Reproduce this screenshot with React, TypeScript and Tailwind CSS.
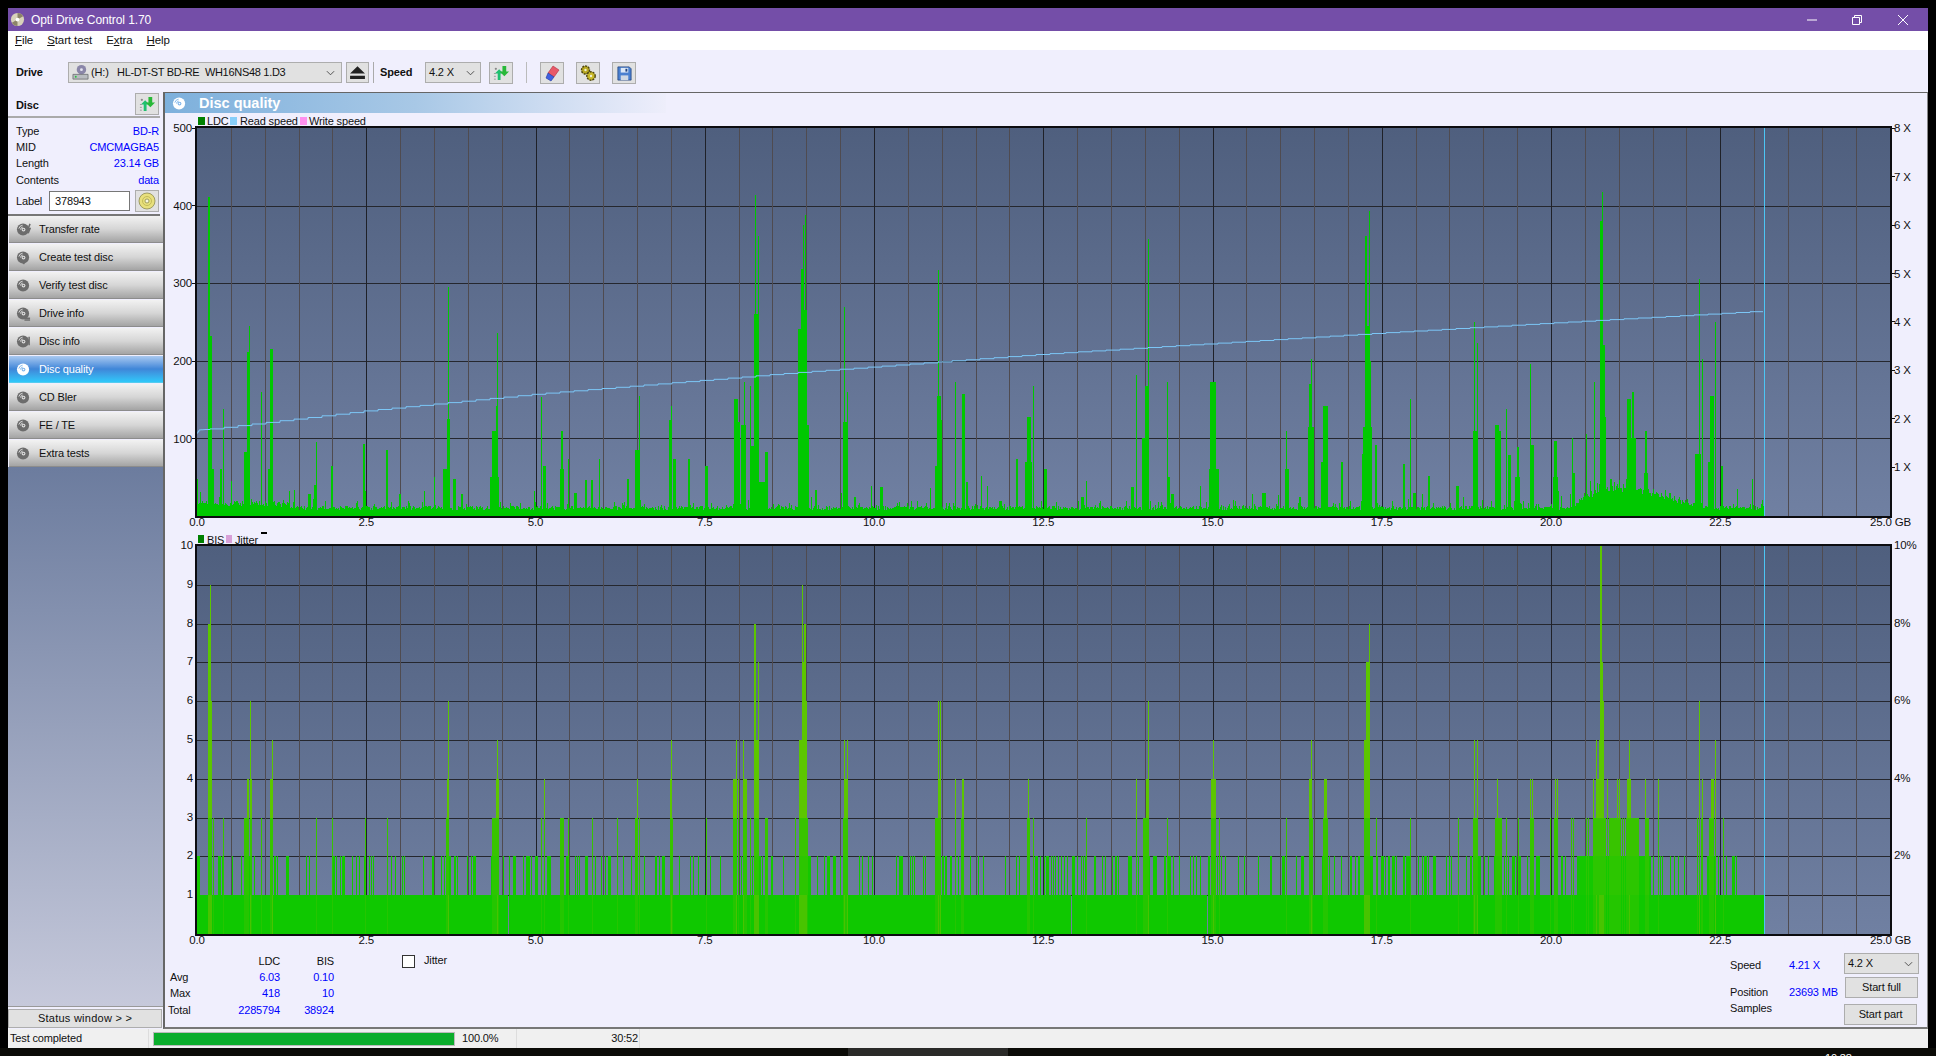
import React from "react";

// plot geometry, in page pixels (the svg viewBoxes use page coordinates)
const X0 = 197;
const GB = 67.7;
const XEND = 1764;
const RIGHT = 1891;
const TOP1 = 128;
const BOT1 = 516;
const TOP2 = 546;
const BOT2 = 934;

type Spike = [number, number, number?];

// spike positions are read from crops: x = offset + zx / 2.613
const ldcSections: [number, Spike[]][] = [
  [190, [[18, 48, 2], [50, 410, 2], [52, 232, 4], [60, 60, 2], [85, 138, 1], [82, 60, 2], [108, 45, 1], [155, 245, 1], [152, 211, 3], [147, 82, 5], [186, 160, 1], [212, 215, 3], [210, 60, 5], [330, 95, 1], [327, 40, 3], [310, 28, 3], [372, 65, 2], [455, 93, 2], [516, 85, 2], [550, 28, 2], [637, 50, 1], [675, 295, 1], [673, 125, 3], [670, 60, 6], [690, 48, 3], [710, 28, 2], [800, 142, 1], [803, 235, 1], [798, 110, 6], [795, 50, 9], [916, 153, 1], [925, 65, 3], [973, 109, 2], [972, 60, 4], [988, 74, 1], [1005, 30, 3], [1035, 46, 2], [1050, 46, 2], [1070, 74, 1], [1145, 48, 2], [1168, 85, 4], [1174, 155, 1], [1257, 142, 1], [1255, 123, 3], [1265, 74, 3], [1303, 74, 2], [1348, 65, 3], [1427, 151, 4], [1432, 121, 3], [1447, 172, 1], [1445, 117, 5], [1462, 168, 1], [1477, 413, 1], [1479, 260, 4], [1485, 361, 1], [1475, 90, 9], [1505, 82, 3], [1495, 44, 6]]],
  [780, [[66, 387, 1], [60, 374, 1], [58, 318, 2], [63, 265, 5], [54, 241, 6], [62, 117, 9], [95, 33, 2], [168, 269, 1], [176, 160, 1], [171, 121, 4], [195, 25, 2], [238, 39, 1], [265, 37, 3], [391, 36, 1], [414, 317, 1], [415, 155, 4], [420, 123, 1], [413, 65, 6], [457, 172, 1], [478, 157, 3], [488, 44, 2], [526, 52, 1], [542, 39, 1], [575, 20, 3], [618, 74, 2], [650, 127, 4], [662, 168, 1], [648, 70, 7], [692, 61, 3], [788, 25, 3], [800, 45, 1], [920, 37, 3], [931, 182, 1], [961, 357, 1], [957, 168, 3], [955, 100, 6], [1012, 173, 1], [1015, 50, 3], [1025, 28, 3], [1098, 39, 1], [1131, 173, 6], [1133, 60, 10], [1265, 30, 4], [1323, 110, 1], [1325, 60, 4], [1358, 25, 2], [1387, 202, 1], [1385, 170, 3], [1388, 115, 6], [1425, 142, 5], [1422, 65, 7], [1468, 70, 2], [1530, 361, 1], [1540, 393, 1], [1533, 245, 5], [1535, 115, 9], [1558, 91, 1]]],
  [1320, [[14, 142, 5], [10, 70, 7], [57, 70, 2], [118, 361, 1], [129, 393, 1], [125, 200, 5], [123, 80, 10], [147, 91, 2], [220, 67, 2], [235, 151, 1], [245, 30, 3], [285, 52, 2], [358, 39, 3], [403, 250, 1], [411, 223, 1], [405, 110, 4], [462, 117, 4], [470, 110, 2], [487, 138, 1], [495, 78, 3], [518, 89, 2], [516, 50, 5], [550, 196, 1], [555, 91, 3], [615, 96, 3], [613, 50, 5], [658, 100, 1], [660, 55, 3], [696, 106, 1], [717, 172, 1], [736, 417, 1], [733, 380, 3], [736, 220, 5], [743, 128, 3], [760, 48, 2], [808, 151, 4], [818, 160, 2], [812, 100, 9], [853, 109, 2], [851, 55, 4], [991, 305, 1], [988, 80, 6], [999, 202, 1], [1024, 154, 4], [1031, 250, 1], [1019, 70, 5], [1050, 65, 2], [1090, 35, 1], [1128, 48, 1]]],
];

const bisSections: [number, Spike[]][] = [
  [190, [[50, 8, 3], [53, 9, 1], [55, 6, 2], [60, 3, 1], [85, 3, 1], [147, 3, 5], [152, 4, 2], [158, 6, 1], [160, 4, 2], [186, 3, 1], [212, 4, 3], [215, 5, 1], [330, 3, 1], [372, 3, 1], [457, 3, 1], [516, 3, 1], [672, 3, 3], [675, 4, 2], [675, 6, 1], [797, 3, 6], [800, 4, 1], [803, 5, 1], [806, 4, 1], [916, 3, 1], [924, 4, 1], [973, 3, 4], [988, 3, 1], [1050, 3, 1], [1117, 3, 1], [1165, 3, 3], [1167, 4, 1], [1172, 3, 1], [1256, 4, 2], [1258, 5, 1], [1260, 3, 1], [1348, 3, 1], [1425, 4, 4], [1428, 5, 1], [1432, 4, 1], [1446, 5, 1], [1449, 4, 3], [1462, 3, 1], [1476, 8, 2], [1484, 7, 1], [1480, 5, 4], [1505, 3, 3]]],
  [780, [[38, 3, 1], [55, 5, 5], [62, 6, 5], [60, 7, 2], [58, 9, 1], [63, 8, 1], [66, 8, 1], [70, 3, 2], [168, 5, 1], [176, 5, 1], [172, 4, 4], [170, 3, 4], [410, 3, 5], [416, 4, 2], [414, 6, 1], [419, 6, 1], [457, 4, 1], [476, 3, 2], [478, 4, 2], [648, 3, 3], [649, 4, 1], [662, 3, 1], [800, 3, 1], [931, 4, 1], [955, 3, 4], [958, 4, 3], [961, 6, 1], [1012, 3, 1], [1132, 4, 5], [1131, 5, 1], [1148, 3, 1], [1323, 3, 1], [1384, 4, 3], [1388, 5, 1], [1390, 3, 2], [1423, 3, 3], [1425, 4, 3], [1532, 5, 5], [1530, 7, 1], [1535, 7, 1], [1540, 8, 1], [1558, 3, 1]]],
  [1320, [[12, 4, 3], [12, 3, 5], [120, 5, 5], [120, 7, 1], [125, 7, 1], [129, 8, 1], [147, 3, 1], [235, 3, 1], [360, 3, 1], [406, 3, 4], [403, 5, 1], [411, 5, 1], [466, 3, 7], [463, 4, 1], [487, 3, 1], [518, 3, 1], [553, 3, 3], [550, 4, 1], [555, 4, 1], [600, 3, 1], [616, 3, 4], [613, 4, 1], [618, 4, 1], [655, 3, 1], [662, 3, 1], [695, 3, 1], [700, 3, 1], [714, 4, 1], [720, 5, 1], [718, 3, 3], [735, 5, 5], [730, 4, 6], [736, 6, 4], [734, 7, 3], [733, 8, 2], [731, 10, 1], [735, 10, 1], [745, 3, 2], [750, 4, 1], [757, 3, 3], [765, 3, 3], [775, 4, 1], [782, 4, 1], [773, 3, 6], [785, 3, 2], [815, 3, 9], [807, 4, 4], [808, 5, 1], [830, 3, 1], [848, 4, 1], [855, 3, 3], [882, 4, 1], [985, 3, 1], [991, 6, 1], [998, 4, 1], [995, 3, 1], [1020, 3, 3], [1024, 4, 3], [1031, 5, 1], [1052, 3, 1]]],
];

function rng(seed: number) {
  let s = seed;
  return () => {
    s = (s + 0x6d2b79f5) | 0;
    let t = Math.imul(s ^ (s >>> 15), 1 | s);
    t = (t + Math.imul(t ^ (t >>> 7), 61 | t)) ^ t;
    return ((t ^ (t >>> 14)) >>> 0) / 4294967296;
  };
}

function applySpikes(cols: number[], sections: [number, Spike[]][]) {
  sections.forEach(([offset, spikes]) => {
    spikes.forEach(([zx, value, width = 1]) => {
      const x = Math.round(offset + zx / 2.613);
      const start = x - Math.floor(width / 2);
      for (let i = start; i < start + width; i++) {
        const idx = i - X0;
        if (idx >= 0 && idx < cols.length && cols[idx] < value) cols[idx] = value;
      }
    });
  });
}

function humpAt(x: number) {
  const pts = [[1570, 0], [1588, 20], [1618, 30], [1645, 24], [1664, 15], [1687, 7], [1705, 0]];
  for (let i = 1; i < pts.length; i++) {
    if (x <= pts[i][0] && x >= pts[i - 1][0]) {
      const f = (x - pts[i - 1][0]) / (pts[i][0] - pts[i - 1][0]);
      return pts[i - 1][1] + f * (pts[i][1] - pts[i - 1][1]);
    }
  }
  return 0;
}

function buildLdc() {
  const r = rng(42);
  const cols: number[] = [];
  for (let x = X0; x < XEND; x++) {
    let v = 8 + r() * 5;
    if (x < 290) v += 5 * r() + 3;
    if (r() < 0.14) v += r() * 9;
    if (r() < 0.012) v += 8 + r() * 14;
    v += humpAt(x) * (0.75 + r() * 0.35);
    cols.push(v);
  }
  applySpikes(cols, ldcSections);
  return cols;
}

function buildBis() {
  const r = rng(7);
  const cols: number[] = [];
  let run = 0;
  for (let x = X0; x < XEND; x++) {
    if (run > 0) run--;
    else if (r() < 0.09) run = r() < 0.3 ? 3 : 1;
    const dense = x > 1576 && x < 1650;
    let v = (run > 0 || r() < 0.1 || dense) && x < 1739 ? 2 : 1;
    if (x > 1594 && x < 1638 && r() < 0.45) v = 3;
    cols.push(v);
  }
  applySpikes(cols, bisSections);
  [508, 1071, 1207].forEach((x) => (cols[x - X0] = 0));
  return cols;
}

const ldc = buildLdc();
const bis = buildBis();

const ldcPath = ldc
  .map((v, i) => `M${X0 + i + 0.5} ${BOT1}V${(BOT1 - v * 0.777).toFixed(1)}`)
  .join("");

// columns are tinted by their height, the lower part keeps a hint of it
function bisColumns(color: string, test: (v: number) => boolean, from: number, to: number) {
  const d = bis
    .map((v, i) => {
      if (!test(v) || v <= from) return "";
      const top = Math.min(v, to);
      return `M${X0 + i + 0.5} ${BOT2 - from * 38.8}V${(BOT2 - top * 38.8).toFixed(1)}`;
    })
    .join("");
  return <path key={`${color}${from}${to}`} d={d} stroke={color} />;
}

// stepped read speed curve
const speedPts = [[197, 433], [199, 430], [205, 429.5], [366, 410.7], [535, 394], [705, 380], [790, 373], [1043, 354], [1380, 333], [1550, 323], [1763, 311]];
function speedPath() {
  let d = `M197 433`;
  let last = 433;
  for (let x = 198; x <= 1763; x++) {
    const j = speedPts.findIndex((p) => p[0] >= x);
    const a = speedPts[j - 1];
    const b = speedPts[j];
    const y = a[1] + ((x - a[0]) / (b[0] - a[0])) * (b[1] - a[1]);
    if (x < 206 || x % 14 === 0) {
      d += `H${x}V${y.toFixed(1)}`;
      last = y;
    }
  }
  return `${d}H1763V${last.toFixed(1)}`;
}

const minor = Array.from({ length: 49 }, (_, i) => i + 1);

function PlotGrid({ top, bottom, hLines, id }: { top: number; bottom: number; hLines: number[]; id: string }) {
  return (
    <>
      <defs>
        <linearGradient id={id} x1="0" y1="0" x2="0" y2="1">
          <stop offset="0" stopColor="#4f5f7e" />
          <stop offset="1" stopColor="#7080a2" />
        </linearGradient>
      </defs>
      <rect x={X0} y={top} width={RIGHT - X0} height={bottom - top} fill={`url(#${id})`} />
      <g shapeRendering="crispEdges">
        {hLines.map((y) => (
          <path key={y} d={`M${X0} ${y}H${RIGHT}`} stroke="#25272e" />
        ))}
        {minor.map((i) => {
          const x = Math.round(X0 + i * 33.85) + 0.5;
          return <path key={i} d={`M${x} ${top}V${bottom}`} stroke={i % 5 === 0 ? "#1f2128" : "#4f4b50"} />;
        })}
      </g>
    </>
  );
}

function PlotFrame({ top, bottom, labels }: { top: number; bottom: number; labels: number }) {
  const ticks = [0, 2.5, 5, 7.5, 10, 12.5, 15, 17.5, 20, 22.5];
  return (
    <g>
      <path d={`M${X0 - 1} ${top - 1}H${RIGHT}V${bottom + 1}H${X0 - 1}Z`} fill="none" stroke="#0c0c10" strokeWidth="2" shapeRendering="crispEdges" />
      <path d={`M${XEND + 0.5} ${top}V${bottom}`} stroke="#4cc6f4" strokeWidth="1" shapeRendering="crispEdges" />
      {ticks.map((t) => (
        <text key={t} x={X0 + t * GB} y={labels} fontSize="11.5" textAnchor="middle" fill="#111">
          {t.toFixed(1)}
        </text>
      ))}
      <text x="1870" y={labels} fontSize="11.5" fill="#111">
        25.0 GB
      </text>
    </g>
  );
}

function LdcChart() {
  const left = [500, 400, 300, 200, 100];
  return (
    <svg viewBox="165 113 1762 419" className="w-[1762px] h-[419px]">
      <rect x="198" y="117" width="7" height="8" fill="#008000" />
      <text x="207" y="125" fontSize="11" fill="#111">LDC</text>
      <rect x="230" y="117" width="7" height="8" fill="#87cefa" />
      <text x="240" y="125" fontSize="11" fill="#111">Read speed</text>
      <rect x="300" y="117" width="7" height="8" fill="#ff90ee" />
      <text x="309" y="125" fontSize="11" fill="#111">Write speed</text>
      <PlotGrid top={TOP1} bottom={BOT1} id="plotA" hLines={[206.5, 283.5, 361.5, 438.5]} />
      <path d={ldcPath} stroke="#00c800" strokeWidth="1" shapeRendering="crispEdges" />
      <path d={speedPath()} stroke="#7cc6f6" strokeWidth="1" fill="none" />
      <PlotFrame top={TOP1} bottom={BOT1} labels={526} />
      {left.map((v, i) => {
        const y = 128 + i * 77.7;
        return (
          <g key={v}>
            <path d={`M192 ${y}H197`} stroke="#111" shapeRendering="crispEdges" />
            <text x="192" y={y + 4} fontSize="11.5" textAnchor="end" fill="#111">{v}</text>
          </g>
        );
      })}
      {[8, 7, 6, 5, 4, 3, 2, 1].map((v) => {
        const y = 515.5 - v * 48.4;
        return (
          <g key={v}>
            <path d={`M1891 ${y}H1895`} stroke="#111" shapeRendering="crispEdges" />
            <text x="1894" y={y + 4} fontSize="11.5" fill="#111">{`${v} X`}</text>
          </g>
        );
      })}
    </svg>
  );
}

function BisChart() {
  const rows = [1, 2, 3, 4, 5, 6, 7, 8, 9];
  return (
    <svg viewBox="165 532 1762 415" className="w-[1762px] h-[415px]">
      <rect x="198" y="535" width="6" height="8" fill="#008000" />
      <text x="207" y="544" fontSize="11" fill="#111">BIS</text>
      <rect x="226" y="535" width="6" height="8" fill="#d8a0d8" />
      <text x="235" y="544" fontSize="11" fill="#111">Jitter</text>
      <rect x="261" y="532" width="6" height="2" fill="#000" />
      <PlotGrid top={TOP2} bottom={BOT2} id="plotB" hLines={rows.map((v) => Math.round(BOT2 - v * 38.8) + 0.5)} />
      <g strokeWidth="1" shapeRendering="crispEdges">
        {bisColumns("#0fc800", (v) => v < 3, 0, 1)}
        {bisColumns("#24c600", (v) => v === 3 || v === 4, 0, 1)}
        {bisColumns("#48c400", (v) => v >= 5, 0, 1)}
        {bisColumns("#14c800", (v) => v === 2, 1, 2)}
        {bisColumns("#2cc600", (v) => v >= 3, 1, 2)}
        {bisColumns("#38c400", (v) => v >= 3, 2, 3)}
        {bisColumns("#5cc600", (v) => v >= 4, 3, 10)}
      </g>
      <PlotFrame top={TOP2} bottom={BOT2} labels={944} />
      {[10, ...rows.slice().reverse()].map((v) => (
        <text key={v} x="193" y={BOT2 - v * 38.8 + 3} fontSize="11.5" textAnchor="end" fill="#111">{v}</text>
      ))}
      {[10, 8, 6, 4, 2].map((v) => (
        <text key={v} x="1894" y={BOT2 - v * 38.8 + 3} fontSize="11.5" fill="#111">{`${v}%`}</text>
      ))}
    </svg>
  );
}

function DiscIcon({ light = false, extra }: { light?: boolean; extra?: string }) {
  const c = light ? "#ffffff" : "#6c6c6c";
  const h = light ? "#7db4ea" : "#e2e2e2";
  return (
    <svg viewBox="0 0 16 16" className="w-[15px] h-[15px] shrink-0">
      <circle cx="7.5" cy="8" r="6.5" fill={c} />
      <path d="M3 7a5 5 0 0 1 4-3.6M4.8 8a3 3 0 0 1 2.4-2.6" stroke={h} strokeWidth="1" fill="none" />
      <circle cx="8" cy="8" r="2" fill={h} />
      <circle cx="8" cy="8" r="0.9" fill={c} />
      {extra && <path d={extra} stroke={c} strokeWidth="1.6" fill="none" />}
    </svg>
  );
}

function ArrowsIcon() {
  return (
    <svg viewBox="0 0 20 18" className="w-[19px] h-[17px]">
      <circle cx="4" cy="4" r="1.2" fill="#888" />
      <path d="M6 16V9H3l4.5-4.5L12 9H9v7z" fill="#20c070" />
      <path d="M11 1h4v6h3l-5 5-5-5h3z" fill="#28b838" />
      <path d="M2 9h2M2 12h2M2 15h2" stroke="#999" strokeWidth="1" />
    </svg>
  );
}

function HddIcon() {
  return (
    <svg viewBox="0 0 18 18" className="w-[17px] h-[17px]">
      <circle cx="10" cy="6" r="5" fill="#8a86a8" />
      <circle cx="10" cy="6" r="1.5" fill="#e4e4f0" />
      <path d="M1 11h16v5H1z" fill="#b8bcc0" stroke="#66696c" strokeWidth="0.8" />
      <circle cx="4" cy="13.5" r="1" fill="#28c040" />
    </svg>
  );
}

function ToolButton({ children }: { children: React.ReactNode }) {
  return (
    <div className="w-[24px] h-[22px] bg-[#e1e1e1] border border-[#adadad] flex items-center justify-center shrink-0">
      {children}
    </div>
  );
}

function Chevron() {
  return (
    <svg viewBox="0 0 10 6" className="w-[9px] h-[6px] shrink-0">
      <path d="M1 1l4 4 4-4" stroke="#444" strokeWidth="1" fill="none" />
    </svg>
  );
}

const navItems: { label: string; extra?: string; active?: boolean }[] = [
  { label: "Transfer rate", extra: "M15 2l-2 5h2l-2 5" },
  { label: "Create test disc", extra: "M7 13l2 2" },
  { label: "Verify test disc" },
  { label: "Drive info", extra: "M9 13h6M9 15h6" },
  { label: "Disc info", extra: "M14 3v9" },
  { label: "Disc quality", active: true },
  { label: "CD Bler" },
  { label: "FE / TE" },
  { label: "Extra tests" },
];

function InfoRow({ label, value }: { label: string; value: string }) {
  return (
    <div className="h-[16.3px] flex items-center justify-between">
      <span>{label}</span>
      <span className="text-[#0000ff]">{value}</span>
    </div>
  );
}

function Sidebar() {
  return (
    <div className="w-[155px] shrink-0 flex flex-col">
      <div className="w-[152px] border-b-2 border-[#777] h-[124px] flex flex-col">
        <div className="h-[26px] border-b-2 border-[#aaa] pl-2 pr-px flex items-center justify-between shrink-0">
          <span className="font-bold pt-[2px]">Disc</span>
          <ToolButton>
            <ArrowsIcon />
          </ToolButton>
        </div>
        <div className="pl-2 pr-px pt-[5px]">
          <InfoRow label="Type" value="BD-R" />
          <InfoRow label="MID" value="CMCMAGBA5" />
          <InfoRow label="Length" value="23.14 GB" />
          <InfoRow label="Contents" value="data" />
        </div>
        <div className="pl-2 pr-px flex items-center mt-[2px]">
          <span className="w-[33px]">Label</span>
          <div className="w-[81px] h-[20px] bg-white border border-[#777] flex items-center pl-[5px]">378943</div>
          <div className="ml-[5px] w-[24px] h-[22px] bg-[#e1e1e1] border border-[#adadad] flex items-center justify-center">
            <svg viewBox="0 0 18 18" className="w-[18px] h-[18px]">
              <circle cx="9" cy="9" r="8" fill="#e8e07c" stroke="#8c8a50" strokeWidth="0.8" />
              <circle cx="9" cy="9" r="4.5" fill="none" stroke="#c4bc58" strokeWidth="1" />
              <circle cx="9" cy="9" r="2" fill="#f8f8e0" stroke="#8c8a50" strokeWidth="0.8" />
            </svg>
          </div>
        </div>
      </div>
      <div className="flex flex-col gap-px pl-px">
        {navItems.map((item) => (
          <div
            key={item.label}
            className={
              item.active
                ? "h-[27px] flex items-center gap-[8px] pl-[7px] pt-px text-white border-b border-[#55ccee] bg-gradient-to-b from-[#a9c9f0] via-[#3f86d8] to-[#2ec8fa]"
                : "h-[27px] flex items-center gap-[8px] pl-[7px] pt-px border-b border-[#8c8c8c] bg-gradient-to-b from-[#f2f2f2] via-[#d6d6d6] to-[#a4a4a4]"
            }
          >
            <DiscIcon light={item.active} extra={item.extra} />
            <span>{item.label}</span>
          </div>
        ))}
      </div>
      <div className="flex-1 bg-gradient-to-b from-[#6c7c9e] to-[#c6c9db]" />
      <div className="h-[23px] border-t border-[#999] pt-[2px] pr-[1px]">
        <div className="h-[19px] bg-[#e1e1e1] border border-[#adadad] flex items-center justify-center tracking-[0.25px] whitespace-pre">Status window &gt; &gt;</div>
      </div>
    </div>
  );
}

function BottomStats() {
  return (
    <div className="h-[80px] flex">
      <div className="pl-[3px] pt-[6px] grid grid-cols-[46px_66px_54px] auto-rows-[16.3px] items-center shrink-0">
        <span />
        <span className="text-right">LDC</span>
        <span className="text-right">BIS</span>
        <span className="pl-[2px]">Avg</span>
        <span className="text-right text-[#0000ff]">6.03</span>
        <span className="text-right text-[#0000ff]">0.10</span>
        <span className="pl-[2px]">Max</span>
        <span className="text-right text-[#0000ff]">418</span>
        <span className="text-right text-[#0000ff]">10</span>
        <span>Total</span>
        <span className="text-right text-[#0000ff]">2285794</span>
        <span className="text-right text-[#0000ff]">38924</span>
      </div>
      <div className="ml-[68px] pt-[8px] flex items-start gap-[9px]">
        <div className="w-[13px] h-[13px] bg-white border border-[#333]" />
        <span>Jitter</span>
      </div>
      <div className="flex-1" />
      <div className="w-[59px] pt-[13px] flex flex-col">
        <span className="h-[16px]">Speed</span>
        <span className="h-[16px] mt-[11px]">Position</span>
        <span className="h-[16px]">Samples</span>
      </div>
      <div className="w-[55px] pt-[13px] flex flex-col text-[#0000ff]">
        <span className="h-[16px]">4.21 X</span>
        <span className="h-[16px] mt-[11px]">23693 MB</span>
      </div>
      <div className="w-[75px] mr-[8px] pt-[6px] flex flex-col">
        <div className="h-[21px] bg-[#e1e1e1] border border-[#adadad] flex items-center justify-between pl-[3px] pr-[5px]">
          <span>4.2 X</span>
          <Chevron />
        </div>
        <div className="h-[21px] w-[73px] ml-px mt-[3px] bg-[#e1e1e1] border border-[#adadad] flex items-center justify-center">Start full</div>
        <div className="h-[21px] w-[73px] mt-[6px] bg-[#e1e1e1] border border-[#adadad] flex items-center justify-center">Start part</div>
      </div>
    </div>
  );
}

export default function App() {
  return (
    <div className="h-[1056px] w-[1936px] overflow-hidden bg-black flex flex-col text-[11px] tracking-[-0.15px] leading-none text-[#111] [font-family:'Liberation_Sans',sans-serif]">
      <div className="h-2 shrink-0" />
      <div className="h-[1040px] mx-2 flex flex-col bg-[#f0effd]">
        <div className="h-[23px] shrink-0 bg-[#744ea8] flex items-center text-white text-[12px] tracking-[-0.08px]">
          <svg viewBox="0 0 16 16" className="w-[15px] h-[15px] ml-[2px] mr-[6px]">
            <circle cx="8" cy="8" r="7" fill="#d8d2ba" />
            <path d="M8 1a7 7 0 0 1 6 3.5L8 8z" fill="#8c8468" />
            <path d="M8 15a7 7 0 0 1-6-3.5L8 8z" fill="#8c8468" />
            <circle cx="8" cy="8" r="2" fill="#fff" />
          </svg>
          <span>Opti Drive Control 1.70</span>
          <div className="ml-auto flex items-center pr-[2px]">
            <div className="w-[45px] flex justify-center">
              <svg viewBox="0 0 12 12" className="w-[12px] h-[12px]"><path d="M1 6h10" stroke="#fff" strokeWidth="1" /></svg>
            </div>
            <div className="w-[46px] flex justify-center">
              <svg viewBox="0 0 12 12" className="w-[12px] h-[12px]"><path d="M1.5 3.5h7v7h-7zM3.5 3.5v-2h7v7h-2" stroke="#fff" strokeWidth="1" fill="none" /></svg>
            </div>
            <div className="w-[46px] flex justify-center">
              <svg viewBox="0 0 12 12" className="w-[12px] h-[12px]"><path d="M1 1l10 10M11 1L1 11" stroke="#fff" strokeWidth="1" /></svg>
            </div>
          </div>
        </div>
        <div className="h-[19px] shrink-0 bg-white flex items-center gap-[14px] pl-[7px] pt-px text-[11.5px] tracking-[-0.1px]">
          <span><u>F</u>ile</span>
          <span><u>S</u>tart test</span>
          <span>E<u>x</u>tra</span>
          <span><u>H</u>elp</span>
        </div>
        <div className="h-[42px] shrink-0 flex items-start pt-[12px] pl-2">
          <span className="font-bold w-[52px] h-[21px] flex items-center">Drive</span>
          <div className="w-[274px] h-[21px] bg-[#e1e1e1] border border-[#adadad] flex items-center pl-[3px] pr-[6px] shrink-0">
            <HddIcon />
            <span className="ml-[2px] w-[26px]">(H:)</span>
            <span className="flex-1 whitespace-pre tracking-[-0.3px]">HL-DT-ST BD-RE  WH16NS48 1.D3</span>
            <Chevron />
          </div>
          <div className="ml-[4px] w-[23px] h-[21px] bg-[#e1e1e1] border border-[#adadad] flex items-center justify-center">
            <svg viewBox="0 0 16 16" className="w-[17px] h-[17px]"><path d="M8 2l7 7H1zM1 11h14v3H1z" fill="#222" /></svg>
          </div>
          <div className="ml-[4px] w-px h-[21px] bg-[#aaa]" />
          <span className="ml-[6px] font-bold w-[45px] h-[21px] flex items-center">Speed</span>
          <div className="w-[56px] h-[21px] bg-[#e1e1e1] border border-[#adadad] flex items-center justify-between pl-[3px] pr-[5px]">
            <span>4.2 X</span>
            <Chevron />
          </div>
          <div className="ml-[8px]">
            <ToolButton><ArrowsIcon /></ToolButton>
          </div>
          <div className="ml-[13px] w-px h-[21px] bg-[#bbb]" />
          <div className="ml-[13px]">
            <ToolButton>
              <svg viewBox="0 0 18 18" className="w-[18px] h-[18px]">
                <path d="M10 2l6 4-5 7-6-4z" fill="#e85868" stroke="#b03040" strokeWidth="0.6" />
                <path d="M5 9l6 4-3 4-5-3z" fill="#4060e0" stroke="#2038a0" strokeWidth="0.6" />
              </svg>
            </ToolButton>
          </div>
          <div className="ml-[12px]">
            <ToolButton>
              <svg viewBox="0 0 18 18" className="w-[18px] h-[18px]">
                <circle cx="6.5" cy="6" r="4" fill="#b8a820" stroke="#4c4410" strokeWidth="1.4" strokeDasharray="2 1" />
                <circle cx="12" cy="12" r="4.2" fill="#c8b828" stroke="#4c4410" strokeWidth="1.4" strokeDasharray="2 1" />
                <circle cx="6.5" cy="6" r="1.2" fill="#f0f0d0" />
                <circle cx="12" cy="12" r="1.2" fill="#f0f0d0" />
              </svg>
            </ToolButton>
          </div>
          <div className="ml-[12px]">
            <ToolButton>
              <svg viewBox="0 0 18 18" className="w-[17px] h-[17px]">
                <path d="M2 2h12l2 2v12H2z" fill="#4a80d0" stroke="#20407c" strokeWidth="0.8" />
                <path d="M5 3h8v5H5z" fill="#dce8f8" />
                <path d="M5 11h8v5H5z" fill="#cfd8e4" />
                <path d="M10 4h2v3h-2z" fill="#20407c" />
              </svg>
            </ToolButton>
          </div>
        </div>
        <div className="h-[937px] shrink-0 flex">
          <Sidebar />
          <div className="flex-1 border-l-2 border-t border-b-2 border-r border-l-[#666] border-t-[#666] border-b-[#777] border-r-[#888] flex flex-col">
            <div className="h-[20px] w-[501px] shrink-0 bg-gradient-to-r from-[#7db0dc] via-[#a8c8e6] to-[#eeeefb] flex items-center gap-[12px] pl-[7px] text-white text-[14.5px] tracking-normal font-bold">
              <DiscIcon light />
              <span>Disc quality</span>
            </div>
            <LdcChart />
            <BisChart />
            <BottomStats />
          </div>
        </div>
        <div className="h-[19px] shrink-0 flex items-center bg-[#f0f0f0]">
          <div className="w-[141px] h-full flex items-center pl-[2px] border-r border-[#ddd]">Test completed</div>
          <div className="ml-[4px] w-[302px] h-[14px] bg-[#0bad2c] border border-[#bbb]" />
          <div className="w-[60px] h-full flex items-center pl-[5px] ml-[2px] border-r border-[#ddd]">100.0%</div>
          <div className="w-[123px] h-full flex items-center justify-end pr-px border-r border-[#ddd]">30:52</div>
        </div>
      </div>
      <div className="flex-1 bg-[#0b0b07] flex overflow-hidden">
        <div className="ml-[848px] w-[160px] h-[8px] bg-[#2a2a28]" />
        <span className="ml-[817px] text-[11px] text-white leading-none pt-[5px] whitespace-nowrap">10:38</span>
      </div>
    </div>
  );
}
